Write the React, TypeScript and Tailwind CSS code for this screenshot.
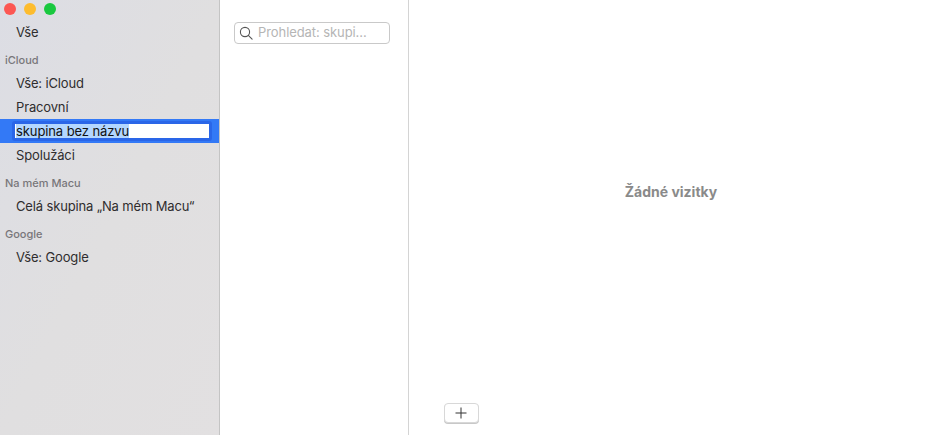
const font = "font-['Inter','Noto_Sans',sans-serif]";

function SidebarRow({ label }: { label: string }) {
  return (
    <div className="flex h-6 items-center pl-4 pt-0.5 text-[13px] tracking-[-0.15px] text-[#2f2d2e]">
      {label}
    </div>
  );
}

function SidebarHeader({ label }: { label: string }) {
  return (
    <div className="mt-1 flex h-[23px] items-center pl-[5px] pt-0.5 text-[11px] font-medium text-[#78767a]">
      {label}
    </div>
  );
}

function TrafficLights() {
  return (
    <div className="flex h-5 items-start gap-2 pl-1 pt-[3px]">
      <div className="h-3 w-3 rounded-full bg-[#fc5753]" />
      <div className="h-3 w-3 rounded-full bg-[#fdbc2e]" />
      <div className="h-3 w-3 rounded-full bg-[#19c83f]" />
    </div>
  );
}

export default function App() {
  return (
    <div className={`flex h-[435px] w-[929px] overflow-hidden bg-white ${font}`}>
      <aside className="w-[220px] shrink-0 border-r border-[#c4c4c4] bg-gradient-to-br from-[#dcdde4] via-[#e0dfe0] to-[#e2e0e1]">
        <TrafficLights />
        <SidebarRow label="Vše" />
        <SidebarHeader label="iCloud" />
        <SidebarRow label="Vše: iCloud" />
        <SidebarRow label="Pracovní" />
        <div className="flex h-6 items-center bg-[#3379f6] pl-3 pr-[7px]">
          <div className="flex h-[20px] w-full items-center rounded-[3px] border-[3px] border-[#2a66e8] bg-white pl-px text-[13px] tracking-[-0.1px] text-[#111]">
            <span className="bg-[#b3d7ff] leading-[14px]">skupina bez názvu</span>
          </div>
        </div>
        <SidebarRow label="Spolužáci" />
        <SidebarHeader label="Na mém Macu" />
        <SidebarRow label="Celá skupina „Na mém Macu“" />
        <SidebarHeader label="Google" />
        <SidebarRow label="Vše: Google" />
      </aside>
      <section className="w-[189px] shrink-0 border-r border-[#d4d4d4] bg-white pl-[14px] pt-[22px]">
        <div className="flex h-[22px] w-[156px] items-center gap-[5px] rounded-[4px] border border-[#c9c9c9] pl-[4px]">
          <svg viewBox="0 0 14 14" className="h-[14px] w-[14px] shrink-0" fill="none" stroke="#555" strokeWidth="1.1">
            <circle cx="6" cy="6" r="4.6" />
            <path d="M9.3 9.3l3.8 3.8" strokeLinecap="round" />
          </svg>
          <span className="text-[13px] tracking-[-0.08px] text-[#b5b5b5]">Prohledat: skupi...</span>
        </div>
      </section>
      <main className="flex flex-1 flex-col">
        <div className="flex h-[383px] items-center justify-center pl-[4px]">
          <span className="text-[14px] font-bold text-[#8a8a8a]">Žádné vizitky</span>
        </div>
        <div className="flex pl-[35px] pt-[20px]">
          <button className="flex h-5 w-[35px] items-center justify-center rounded-[4px] border border-[#d8d8d8] bg-white pr-px shadow-[0_1px_0_#c8c8c8]">
            <svg viewBox="0 0 12 12" className="h-3 w-3" fill="none" stroke="#333" strokeWidth="1">
              <path d="M6 .5v11M.5 6h11" />
            </svg>
          </button>
        </div>
      </main>
    </div>
  );
}
